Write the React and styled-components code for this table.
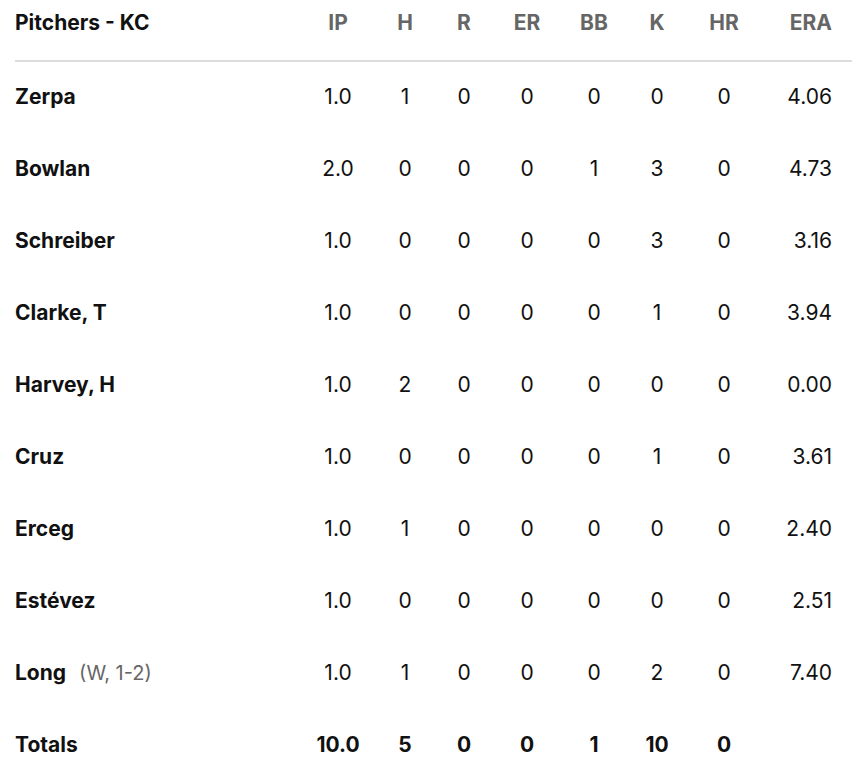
import React from 'react'
import styled, { createGlobalStyle } from 'styled-components'

const GlobalStyle = createGlobalStyle`
  body {
    margin: 0;
    background: #fff;
    font-family: Inter, "Noto Sans", Arial, sans-serif;
    color: #111;
  }
`

const cols = '289px 68px 66px 52px 74px 60px 66px 68px 94px'

const Table = styled.div`
  padding-left: 15px;
  width: 837px;
`

const HeadRow = styled.div`
  display: grid;
  grid-template-columns: ${cols};
  align-items: center;
  height: 44px;
  padding-bottom: 16px;
  border-bottom: 2px solid #dcdcdc;
  font-size: 21px;
  font-weight: 700;
  color: #666;
`

const Row = styled.div`
  display: grid;
  grid-template-columns: ${cols};
  align-items: center;
  height: 68px;
  padding-bottom: 4px;
  font-size: 21px;
  font-weight: ${p => (p.$total ? 700 : 400)};
`

const Title = styled.div`
  color: #111;
`

const Name = styled.div`
  font-weight: 700;
`

const Note = styled.span`
  font-weight: 400;
  font-size: 20px;
  color: #666;
  margin-left: 13px;
`

const Cell = styled.div`
  text-align: ${p => (p.$right ? 'right' : 'center')};
  padding-right: ${p => (p.$right ? '20px' : '0')};
`

const stats = ['IP', 'H', 'R', 'ER', 'BB', 'K', 'HR', 'ERA']

const pitchers = [
  ['Zerpa', '', ['1.0', 1, 0, 0, 0, 0, 0, '4.06']],
  ['Bowlan', '', ['2.0', 0, 0, 0, 1, 3, 0, '4.73']],
  ['Schreiber', '', ['1.0', 0, 0, 0, 0, 3, 0, '3.16']],
  ['Clarke, T', '', ['1.0', 0, 0, 0, 0, 1, 0, '3.94']],
  ['Harvey, H', '', ['1.0', 2, 0, 0, 0, 0, 0, '0.00']],
  ['Cruz', '', ['1.0', 0, 0, 0, 0, 1, 0, '3.61']],
  ['Erceg', '', ['1.0', 1, 0, 0, 0, 0, 0, '2.40']],
  ['Estévez', '', ['1.0', 0, 0, 0, 0, 0, 0, '2.51']],
  ['Long', '(W, 1-2)', ['1.0', 1, 0, 0, 0, 2, 0, '7.40']],
]

const totals = ['10.0', 5, 0, 0, 1, 10, 0, '']

export default function App() {
  return (
    <>
      <GlobalStyle />
      <Table>
        <HeadRow>
          <Title>Pitchers - KC</Title>
          {stats.map((s, i) => (
            <Cell key={s} $right={i === 7}>{s}</Cell>
          ))}
        </HeadRow>
        {pitchers.map(([name, note, vals]) => (
          <Row key={name}>
            <Name>
              {name}
              {note && <Note>{note}</Note>}
            </Name>
            {vals.map((v, i) => (
              <Cell key={i} $right={i === 7}>{v}</Cell>
            ))}
          </Row>
        ))}
        <Row $total>
          <Name>Totals</Name>
          {totals.map((v, i) => (
            <Cell key={i} $right={i === 7}>{v}</Cell>
          ))}
        </Row>
      </Table>
    </>
  )
}
